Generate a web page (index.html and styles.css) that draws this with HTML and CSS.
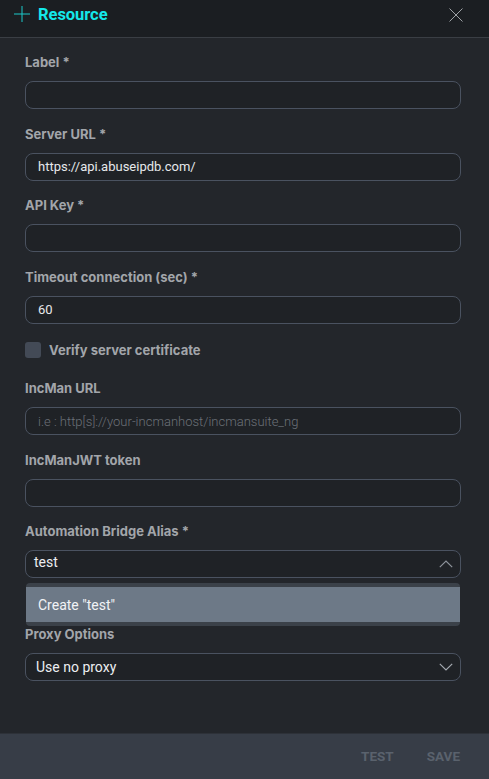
FILE: index.html
```html
<!DOCTYPE html>
<html lang="en">
<head>
<meta charset="utf-8">
<title>Resource</title>
<link rel="stylesheet" href="styles.css">
</head>
<body>
<div class="panel">
  <header class="header">
    <div class="title">
      <svg class="plus" width="16" height="16" viewBox="0 0 16 16"><path d="M8 0V16M0 8H16" stroke="#1cc9ca" stroke-width="1" fill="none"/></svg>
      <span>Resource</span>
    </div>
    <svg class="close" width="14" height="14" viewBox="0 0 14 14"><path d="M0.5 0.5L13.5 13.5M13.5 0.5L0.5 13.5" stroke="#aeb1b6" stroke-width="0.9" fill="none"/></svg>
  </header>

  <main class="form">
    <div class="field">
      <label class="label">Label *</label>
      <div class="input"></div>
    </div>
    <div class="field">
      <label class="label">Server URL *</label>
      <div class="input">https://api.abuseipdb.com/</div>
    </div>
    <div class="field">
      <label class="label">API Key *</label>
      <div class="input"></div>
    </div>
    <div class="field">
      <label class="label">Timeout connection (sec) *</label>
      <div class="input">60</div>
    </div>
    <div class="check-row">
      <span class="checkbox"></span>
      <span class="check-label">Verify server certificate</span>
    </div>
    <div class="field">
      <label class="label">IncMan URL</label>
      <div class="input placeholder">i.e : http[s]://your-incmanhost/incmansuite_ng</div>
    </div>
    <div class="field">
      <label class="label">IncManJWT token</label>
      <div class="input"></div>
    </div>
    <div class="field field-open">
      <label class="label">Automation Bridge Alias *</label>
      <div class="input select select-open">
        <span class="select-value">test</span>
        <svg class="chev" width="14" height="8" viewBox="0 0 14 8"><path d="M0.8 7.2L7 1L13.2 7.2" stroke="#8d939b" stroke-width="1.2" fill="none"/></svg>
      </div>
      <div class="menu">
        <div class="menu-item">Create "test"</div>
      </div>
    </div>
    <div class="field">
      <label class="label">Proxy Options</label>
      <div class="input select">
        <span class="select-value proxy">Use no proxy</span>
        <svg class="chev" width="14" height="8" viewBox="0 0 14 8"><path d="M0.8 0.8L7 7L13.2 0.8" stroke="#a4a9b0" stroke-width="1.2" fill="none"/></svg>
      </div>
    </div>
  </main>

  <footer class="footer">
    <span class="btn">TEST</span>
    <span class="btn">SAVE</span>
  </footer>
</div>
</body>
</html>
```

FILE: styles.css
```css
html, body {
  margin: 0;
  padding: 0;
  height: 100%;
}
body {
  background: #23262b;
  font-family: Roboto, "Liberation Sans", sans-serif;
  overflow: hidden;
}
.panel {
  display: flex;
  flex-direction: column;
  height: 779px;
}
.header {
  height: 37px;
  background: #1b1e22;
  border-bottom: 1px solid #3a3e44;
  display: flex;
  align-items: center;
  justify-content: space-between;
  padding: 0 26px 0 14px;
  box-sizing: content-box;
  flex-shrink: 0;
}
.title {
  display: flex;
  align-items: center;
  gap: 8px;
  margin-top: -9px;
}
.title span {
  color: #14e8ea;
  font-weight: 700;
  font-size: 16.5px;
  letter-spacing: -0.05px;
}
.close {
  margin-top: -7px;
}
.form {
  flex: 1;
  padding: 16px 28px 0 25px;
  display: flex;
  flex-direction: column;
}
.field {
  display: flex;
  flex-direction: column;
  gap: 11px;
  margin-bottom: 16.5px;
}
.label {
  font-family: Inter, Roboto, sans-serif;
  font-weight: 700;
  font-size: 13px;
  line-height: 16px;
  color: #a2a5aa;
}
.input {
  height: 28px;
  box-sizing: border-box;
  border: 1px solid #4a5260;
  border-radius: 8px;
  background: #1f2226;
  padding: 0 12px;
  display: flex;
  align-items: center;
  font-size: 13px;
  color: #e6e8eb;
}
.placeholder {
  color: #6c7178;
  font-weight: 300;
}
.check-row {
  display: flex;
  align-items: center;
  gap: 8px;
  margin-top: 2px;
  margin-bottom: 22px;
}
.checkbox {
  width: 16px;
  height: 16px;
  border-radius: 3px;
  background: #434a56;
}
.check-label {
  font-family: Inter, Roboto, sans-serif;
  font-weight: 700;
  font-size: 13px;
  line-height: 16px;
  color: #a2a5aa;
}
.select {
  justify-content: space-between;
  padding: 0 7px 0 8px;
}
.select-value {
  font-size: 14px;
  color: #eceef1;
}
.select-open .select-value {
  margin-top: -5px;
}
.select-value.proxy {
  padding-left: 2px;
}
.field-open {
  gap: 11px;
  margin-bottom: 0;
}
.menu {
  margin: -6px 1px 0 1px;
  background: #3b4149;
  border-radius: 4px;
  padding: 4px 0;
}
.menu-item {
  height: 35px;
  background: #6d7987;
  display: flex;
  align-items: center;
  padding-left: 12px;
  font-size: 14px;
  color: #f1f3f6;
}
.footer {
  height: 45px;
  flex-shrink: 0;
  background: #373d47;
  border-top: 1px solid #2d3138;
  display: flex;
  align-items: center;
  justify-content: flex-end;
  gap: 33px;
  padding: 0 29px 0 0;
}
.btn {
  font-weight: 700;
  font-size: 13.5px;
  color: #5a626d;
  margin-top: -2px;
}
```
